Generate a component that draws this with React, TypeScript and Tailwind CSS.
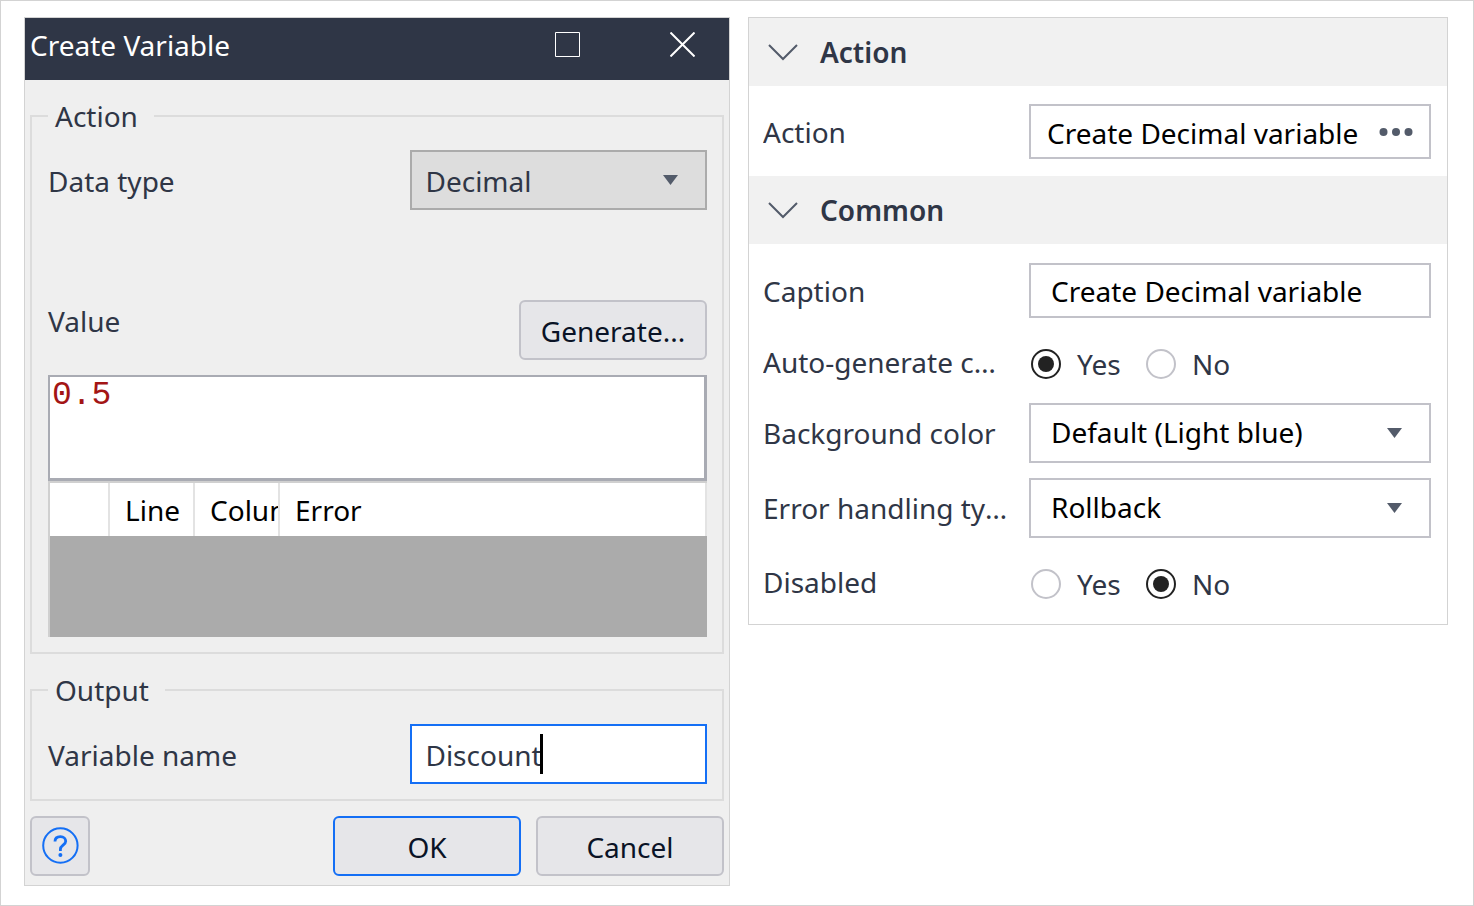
import { useState } from "react";
import type { ReactNode } from "react";

function Triangle() {
  return (
    <svg
      aria-hidden="true"
      viewBox="0 0 15 10"
      className="pointer-events-none absolute top-1/2 right-[29px] h-[10px] w-[15px] -translate-y-1/2 fill-[#535b6a]"
    >
      <path d="M0 0H15L7.5 10Z" />
    </svg>
  );
}

function Chevron() {
  return (
    <svg
      aria-hidden="true"
      viewBox="0 0 30 18"
      className="h-[18px] w-[30px] fill-none stroke-[#535b6a] stroke-2"
    >
      <path d="M1 2L15 16L29 2" />
    </svg>
  );
}

function Group({ title, children }: { title: string; children: ReactNode }) {
  return (
    <fieldset className="min-w-0 border-2 border-[#dcdcdc] pt-[14px] pr-[15px] pb-[15px] pl-4">
      <legend className="h-10 pr-4 pl-[7px] leading-10">{title}</legend>
      {children}
    </fieldset>
  );
}

const dialogButton = "h-[60px] w-[188px] rounded-md border-2 bg-[#e6e6e9] pt-[2px] text-[#0a1326]";

function CreateVariableDialog() {
  const [value, setValue] = useState("0.5");
  const [name, setName] = useState("Discount");
  return (
    <section
      aria-label="Create Variable"
      className="border border-[#d3d3d3] bg-[#efefef] text-[#2f3646]"
    >
      <header className="flex h-[62px] items-start justify-between bg-[#2f3646] pr-[34px] pl-[5px] text-white">
        <h1 className="leading-[54px]">Create Variable</h1>
        <div className="flex gap-[90px] pt-[14px]">
          <button type="button" aria-label="Maximize" className="block">
            <svg viewBox="0 0 25 25" className="size-[25px] fill-none stroke-white">
              <path d="M.5 .5H24.5V24.5H.5Z" />
            </svg>
          </button>
          <button type="button" aria-label="Close" className="block">
            <svg viewBox="0 0 25 25" className="size-[25px] fill-none stroke-white stroke-2">
              <path d="M.5 .5L24.5 24.5M24.5 .5L.5 24.5" />
            </svg>
          </button>
        </div>
      </header>

      <form className="flex flex-col px-[5px] pt-4 pb-[9px]" onSubmit={(e) => e.preventDefault()}>
        <Group title="Action">
          <div className="flex items-center justify-between">
            <label htmlFor="data-type" className="pt-[2px]">
              Data type
            </label>
            <div className="relative h-[60px] w-[45%]">
              <select
                id="data-type"
                className="size-full appearance-none border-2 border-[#ababab] bg-[#dddddd] pt-[2px] pl-[13px] outline-none"
              >
                <option>Decimal</option>
              </select>
              <Triangle />
            </div>
          </div>

          <div className="mt-[90px] flex items-start justify-between">
            <label htmlFor="value" className="leading-[42px]">
              Value
            </label>
            <button type="button" className={`${dialogButton} border-[#c2c2c9]`}>
              Generate...
            </button>
          </div>

          <textarea
            id="value"
            value={value}
            spellCheck={false}
            onChange={(e) => setValue(e.target.value)}
            className="mt-[15px] block h-[106px] w-full resize-none border-2 border-r-[3px] border-b-[3px] border-[#a9abb3] bg-white px-[2px] font-['Liberation_Mono',monospace] text-[33px] leading-[38px] text-[#a31515] outline-none"
          />

          <div className="h-[156px] border-t-2 border-l-2 border-[#d0d0d0] bg-[#ababab]">
            <table className="w-full table-fixed border-separate border-spacing-0 bg-white text-left text-black">
              <thead>
                <tr className="h-[53px]">
                  <th scope="col" aria-label="Marker" className="w-[60px] border-r-2 border-[#e3e3e3]" />
                  <th scope="col" className="w-[85px] overflow-hidden border-r-2 border-[#e3e3e3] p-0 pt-px pl-[15px] font-normal">
                    Line
                  </th>
                  <th scope="col" className="w-[85px] overflow-hidden border-r-2 border-[#e3e3e3] p-0 pt-px pl-[15px] font-normal">
                    Column
                  </th>
                  <th scope="col" className="border-r-2 border-[#e3e3e3] p-0 pt-px pl-[15px] font-normal">
                    Error
                  </th>
                </tr>
              </thead>
            </table>
          </div>
        </Group>

        <div className="mt-4">
          <Group title="Output">
            <div className="flex items-center justify-between">
              <label htmlFor="variable-name" className="pt-[2px]">
                Variable name
              </label>
              <div className="relative h-[60px] w-[45%]">
                <input
                  id="variable-name"
                  type="text"
                  value={name}
                  onChange={(e) => setName(e.target.value)}
                  className="size-full border-2 border-[#146ff5] bg-white pt-[2px] pl-[13px] outline-none"
                />
                <span
                  aria-hidden="true"
                  className="pointer-events-none absolute top-[10px] left-[130px] h-10 w-[3px] bg-black"
                />
              </div>
            </div>
          </Group>
        </div>

        <div className="mt-[15px] flex gap-[15px]">
          <button
            type="button"
            aria-label="Help"
            className="mr-auto flex size-[60px] items-center justify-center rounded-md border-2 border-[#c2c2c9] bg-[#e6e6e9]"
          >
            <svg viewBox="0 0 36 36" className="size-9 overflow-visible fill-none stroke-[#146ff5] stroke-2">
              <circle cx="18.4" cy="17.5" r="17.2" />
              <path
                strokeWidth="2.8"
                d="M13 13.6C13 10.4 15.2 8.7 18.4 8.7C21.7 8.7 23.7 10.6 23.7 13.2C23.7 17 18.4 17.4 18.4 21.2V23"
              />
              <circle cx="18.4" cy="27" r="2" className="fill-[#146ff5] stroke-none" />
            </svg>
          </button>
          <button type="submit" className={`${dialogButton} border-[#146ff5]`}>
            OK
          </button>
          <button type="button" className={`${dialogButton} border-[#c2c2c9]`}>
            Cancel
          </button>
        </div>
      </form>
    </section>
  );
}

function SectionHeader({ title }: { title: string }) {
  return (
    <h2 className="bg-[#f1f1f1] font-semibold">
      <button type="button" className="flex h-[68px] w-full items-center gap-[22px] pl-[19px] text-left">
        <Chevron />
        {title}
      </button>
    </h2>
  );
}

function Row({ label, htmlFor, children }: { label: string; htmlFor: string; children: ReactNode }) {
  return (
    <div className="grid grid-cols-[266fr_402fr] items-center">
      <label htmlFor={htmlFor} className="truncate pr-5">
        {label}
      </label>
      {children}
    </div>
  );
}

function Dropdown({ id, value }: { id: string; value: string }) {
  return (
    <div className="relative h-[60px]">
      <select
        id={id}
        className="size-full appearance-none border-2 border-[#c2c2c9] bg-white pb-[2px] pl-5 text-black outline-none"
      >
        <option>{value}</option>
      </select>
      <Triangle />
    </div>
  );
}

const radioClass =
  "relative size-[30px] shrink-0 appearance-none rounded-full border-2 border-[#c2c2c9] bg-white checked:border-[#222222] before:absolute before:inset-[5px] before:rounded-full checked:before:bg-[#222222]";

function YesNoRow({ label, name, initial }: { label: string; name: string; initial: boolean }) {
  const [on, setOn] = useState(initial);
  return (
    <div role="radiogroup" aria-label={label} className="grid h-[55px] grid-cols-[266fr_402fr] items-center pt-[7px]">
      <span className="truncate pr-5 pb-1">{label}</span>
      <div className="flex pl-[2px]">
        <label className="flex w-[115px] items-center gap-4">
          <input type="radio" name={name} checked={on} onChange={() => setOn(true)} className={radioClass} />
          Yes
        </label>
        <label className="flex items-center gap-4">
          <input type="radio" name={name} checked={!on} onChange={() => setOn(false)} className={radioClass} />
          No
        </label>
      </div>
    </div>
  );
}

function PropertiesPane() {
  const [caption, setCaption] = useState("Create Decimal variable");
  return (
    <section aria-label="Properties" className="border border-[#d3d3d3] bg-white text-[#2f3646]">
      <SectionHeader title="Action" />
      <div className="pt-[18px] pr-4 pb-[17px] pl-[14px]">
        <Row label="Action" htmlFor="action">
          <button
            id="action"
            type="button"
            className="flex h-[55px] items-center justify-between border-2 border-[#c2c2c9] bg-white px-4 whitespace-nowrap text-black"
          >
            <span className="pt-[2px]">Create Decimal variable</span>
            <svg aria-hidden="true" viewBox="0 0 34 8" className="h-2 w-[34px] fill-[#535b6a]">
              <circle cx="4.5" cy="4" r="4" />
              <circle cx="17" cy="4" r="4" />
              <circle cx="29.5" cy="4" r="4" />
            </svg>
          </button>
        </Row>
      </div>
      <SectionHeader title="Common" />
      <div className="flex flex-col gap-[15px] pt-[19px] pr-4 pb-4 pl-[14px]">
        <Row label="Caption" htmlFor="caption">
          <input
            id="caption"
            type="text"
            value={caption}
            onChange={(e) => setCaption(e.target.value)}
            className="h-[55px] w-full border-2 border-[#c2c2c9] bg-white pl-5 text-black outline-none"
          />
        </Row>
        <YesNoRow label="Auto-generate caption" name="auto-generate" initial={true} />
        <Row label="Background color" htmlFor="background">
          <Dropdown id="background" value="Default (Light blue)" />
        </Row>
        <Row label="Error handling type" htmlFor="error-handling">
          <Dropdown id="error-handling" value="Rollback" />
        </Row>
        <YesNoRow label="Disabled" name="disabled" initial={false} />
      </div>
    </section>
  );
}

export default function App() {
  return (
    <main className="grid min-h-screen grid-cols-[706fr_700fr] items-start gap-[18px] border border-[#d3d3d3] bg-white pt-4 pr-[25px] pb-[19px] pl-[23px] font-['Noto_Sans',sans-serif] text-[28px] leading-9">
      <CreateVariableDialog />
      <PropertiesPane />
    </main>
  );
}
